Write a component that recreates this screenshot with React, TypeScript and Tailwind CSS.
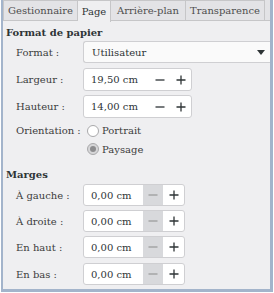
import React from "react";

function Minus() {
  return (
    <svg width="10" height="10" viewBox="0 0 10 10">
      <path d="M0.5 5h9" stroke="currentColor" strokeWidth="1.3" />
    </svg>
  );
}
function Plus() {
  return (
    <svg width="10" height="10" viewBox="0 0 10 10">
      <path d="M0.5 5h9M5 0.5v9" stroke="currentColor" strokeWidth="1.3" />
    </svg>
  );
}

function Spin({ value, small }: { value: string; small?: boolean }) {
  return (
    <div
      className={
        "flex items-stretch rounded-[3px] border border-[#cfcfd2] bg-white " +
        (small ? "h-[22px] w-[102px]" : "h-[23px] w-[109px]")
      }
    >
      <div className="flex flex-1 items-center whitespace-nowrap pl-[7px] text-[10px] text-[#2e3436]">{value}</div>
      <div
        className={
          "flex w-[20px] items-center justify-center " +
          (small ? "bg-[#d8d9dc] text-[#9c9c9c]" : "text-[#2e3436]")
        }
      >
        <Minus />
      </div>
      <div className="flex w-[21px] items-center justify-center text-[#2e3436]">
        <Plus />
      </div>
    </div>
  );
}

function Row({ label, children, mt }: { label: string; children: React.ReactNode; mt: string }) {
  return (
    <div className={"flex items-center " + mt}>
      <div className="w-[80px] whitespace-nowrap pl-[13px] text-[10px] text-[#3c3c3c]">{label}</div>
      {children}
    </div>
  );
}

function Tab({ label, w, active }: { label: string; w: string; active?: boolean }) {
  return active ? (
    <div
      className={
        "flex h-[22px] items-center justify-center whitespace-nowrap border-r border-t border-[#c6c6c8] bg-[#efeff1] text-[10px] text-[#2e3436] " +
        w
      }
    >
      {label}
    </div>
  ) : (
    <div
      className={
        "flex h-[21px] items-center justify-center whitespace-nowrap border-b border-r border-t border-[#c6c6c8] bg-[#e3e3e6] text-[10px] text-[#4e4e4e] " +
        w
      }
    >
      {label}
    </div>
  );
}

export default function App() {
  return (
    <div className="h-[293px] w-[274px] overflow-hidden bg-white font-['DejaVu_Serif','Liberation_Serif',serif]">
      <div className="ml-[1px] flex h-[292px] w-[272px] flex-col border-b-[3px] border-l-[2px] border-r-[3px] border-[#a3b4cb] bg-[#efeff1]">
        <div className="flex h-[22px] items-start bg-[#efeff1]">
          <Tab label="Gestionnaire" w="w-[75px] border-l" />
          <Tab label="Page" w="w-[33px]" active />
          <Tab label="Arrière-plan" w="w-[75px]" />
          <Tab label="Transparence" w="w-[79px]" />
          <div className="h-[21px] flex-1 border-b border-[#c6c6c8] bg-[#e3e3e6]" />
        </div>
        <div className="mt-[3px] flex h-[14px] items-center whitespace-nowrap pl-[3px] text-[10px] font-bold text-[#2e3436]">
          Format de papier
        </div>
        <Row label="Format :" mt="mt-[2px]">
          <div className="flex h-[22px] flex-1 items-center justify-between rounded-l-[3px] border border-r-0 border-[#cfcfd2] bg-[#fafafa] pl-[8px] pr-[5px] text-[10px] text-[#2e3436]">
            <span>Utilisateur</span>
            <svg width="8" height="5" viewBox="0 0 8 5">
              <path d="M0 0h8L4 5z" fill="#2e3436" />
            </svg>
          </div>
        </Row>
        <Row label="Largeur :" mt="mt-[5px]">
          <Spin value="19,50 cm" />
        </Row>
        <Row label="Hauteur :" mt="mt-[4px]">
          <Spin value="14,00 cm" />
        </Row>
        <Row label="Orientation :" mt="mt-[5px]">
          <div className="flex h-[14px] items-center gap-[3px] pl-[4px] text-[10px] text-[#3c3c3c]">
            <span className="inline-block h-[12px] w-[12px] rounded-full border border-[#a9a9ab] bg-white" />
            <span className="whitespace-nowrap">Portrait</span>
          </div>
        </Row>
        <div className="mt-[4px] flex h-[14px] items-center gap-[3px] pl-[84px] text-[10px] text-[#3c3c3c]">
          <span className="flex h-[12px] w-[12px] items-center justify-center rounded-full border border-[#a9a9ab] bg-[#d6d6d8]">
            <span className="h-[6px] w-[6px] rounded-full bg-[#8c8c8e]" />
          </span>
          <span className="whitespace-nowrap">Paysage</span>
        </div>
        <div className="mt-[11px] flex h-[14px] items-center pl-[3px] text-[10px] font-bold text-[#2e3436]">Marges</div>
        <Row label="À gauche :" mt="mt-[3px]">
          <Spin value="0,00 cm" small />
        </Row>
        <Row label="À droite :" mt="mt-[4px]">
          <Spin value="0,00 cm" small />
        </Row>
        <Row label="En haut :" mt="mt-[4px]">
          <Spin value="0,00 cm" small />
        </Row>
        <Row label="En bas :" mt="mt-[5px]">
          <Spin value="0,00 cm" small />
        </Row>
      </div>
    </div>
  );
}
